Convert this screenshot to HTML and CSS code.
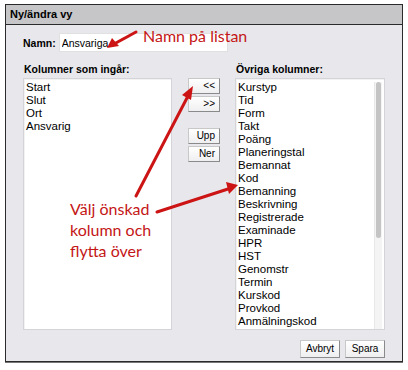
FILE: index.html
```html
<!DOCTYPE html>
<html lang="sv">
<head>
  <meta charset="UTF-8" />
  <title>Ny/ändra vy</title>
  <link rel="stylesheet" href="styles.css">
</head>
<body>
  <div class="dialog">
    <div class="titlebar">Ny/ändra vy</div>
    <div class="content">
      <!-- namn -->
      <div class="name-row">
        <label for="name">Namn:</label>
        <input type="text" id="name" value="Ansvariga" />
      </div>

      <!-- kolumner -->
      <div class="columns">
        <div class="col">
          <div class="col-label">Kolumner som ingår:</div>
          <div class="listbox">
            <div>Start</div>
            <div>Slut</div>
            <div>Ort</div>
            <div>Ansvarig</div>
          </div>
        </div>

        <div class="movers">
          <button class="btn">&lt;&lt;</button>
          <button class="btn">&gt;&gt;</button>
          <button class="btn spaced">Upp</button>
          <button class="btn">Ner</button>
        </div>

        <div class="col">
          <div class="col-label">Övriga kolumner:</div>
          <div class="listbox scroll">
            <div class="items">
              <div>Kurstyp</div>
              <div>Tid</div>
              <div>Form</div>
              <div>Takt</div>
              <div>Poäng</div>
              <div>Planeringstal</div>
              <div>Bemannat</div>
              <div>Kod</div>
              <div>Bemanning</div>
              <div>Beskrivning</div>
              <div>Registrerade</div>
              <div>Examinade</div>
              <div>HPR</div>
              <div>HST</div>
              <div>Genomstr</div>
              <div>Termin</div>
              <div>Kurskod</div>
              <div>Provkod</div>
              <div>Anmälningskod</div>
            </div>
            <div class="scrollbar"><div class="thumb"></div></div>
          </div>
        </div>
      </div>

      <div class="footer">
        <button class="btn">Avbryt</button>
        <button class="btn">Spara</button>
      </div>
    </div>
  </div>

  <!-- röda anteckningar -->
  <div class="note note-name">Namn på listan</div>
  <div class="note note-pick">Välj önskad<br>kolumn och<br>flytta över</div>
  <svg class="arrows" width="408" height="370" viewBox="0 0 408 370">
    <g stroke="#cc1414" stroke-width="3" stroke-linecap="round" fill="none">
      <line x1="136" y1="32" x2="114" y2="44" />
      <line x1="136" y1="196" x2="188" y2="96" />
      <line x1="157" y1="212" x2="228" y2="189" />
    </g>
    <g fill="#cc1414">
      <polygon points="107,48 112,38 119,46" />
      <polygon points="193,86 191,100 182,95" />
      <polygon points="238,185 226,182 229,194" />
    </g>
  </svg>
</body>
</html>
```

FILE: styles.css
```css
body {
  margin: 0;
  padding: 4px 5px;
  background: #fff;
  font-family: "Liberation Sans", Arial, sans-serif;
  font-size: 11px;
  color: #000;
}
.dialog {
  width: 396px;
  height: 356px;
  border: 1px solid #2a2a2a;
  box-shadow: 0 1px 0 #777;
  background: #e8e8ec;
  display: flex;
  flex-direction: column;
}
.titlebar {
  height: 19px;
  line-height: 19px;
  padding-left: 4px;
  background: #c6c6c8;
  border-bottom: 1px solid #2a2a2a;
  font-weight: bold;
}
.content {
  flex: 1;
  padding: 8px 17px 0 17px;
  display: flex;
  flex-direction: column;
}
.name-row {
  display: flex;
  align-items: center;
  gap: 3px;
}
.name-row label {
  font-weight: bold;
  font-size: 10.5px;
}
.name-row input {
  width: 163px;
  height: 15px;
  padding: 1px 2px;
  border: 1px solid #e0e0e0;
  background: #fff;
  font-family: "Liberation Sans", Arial, sans-serif;
  font-size: 10.5px;
  outline: none;
}
.columns {
  display: flex;
  margin-top: 11px;
}
.col-label {
  font-weight: bold;
  font-size: 10.5px;
  height: 13px;
  line-height: 13px;
  margin-bottom: 2px;
  padding-left: 1px;
}
.listbox {
  width: 143px;
  height: 246px;
  padding: 2px;
  background: #fff;
  border: 1px solid #d4d4d8;
  box-shadow: inset 1px 1px 0 #f2f2f2;
  line-height: 13px;
  font-size: 11.5px;
  overflow: hidden;
}
.listbox.scroll {
  display: flex;
  width: 144px;
}
.items { flex: 1; }
.scrollbar {
  width: 7px;
  margin: 1px 0 -4px;
  background: #f4f4f4;
  border-left: 1px solid #e8e8e8;
}
.thumb {
  height: 156px;
  margin: 0 1px;
  border-radius: 3px;
  background: #c4c4c4;
}
.movers {
  display: flex;
  flex-direction: column;
  gap: 2px;
  padding-top: 15px;
  margin: 0 15px 0 16px;
  width: 34px;
}
.movers .spaced { margin-top: 14px; }
.btn {
  height: 16px;
  padding: 0 4px;
  border: 1px solid #c8c8c8;
  border-right-color: #8a8a8a;
  border-bottom-color: #8a8a8a;
  background: linear-gradient(#ffffff, #efeff1);
  font-family: "Liberation Sans", Arial, sans-serif;
  font-size: 10px;
  line-height: 14px;
  color: #000;
  text-align: right;
}
.footer {
  display: flex;
  justify-content: flex-end;
  gap: 5px;
  margin-top: 10px;
}
.footer .btn {
  width: 40px;
  height: 18px;
  text-align: center;
  padding: 0;
}
.note {
  position: absolute;
  font-family: Lato, "Open Sans", sans-serif;
  color: #c41616;
  font-size: 16px;
  line-height: 21px;
}
.note-name { left: 143px; top: 25px; }
.note-pick { left: 70px; top: 198px; }
.arrows {
  position: absolute;
  left: 0;
  top: 0;
  pointer-events: none;
}
```
